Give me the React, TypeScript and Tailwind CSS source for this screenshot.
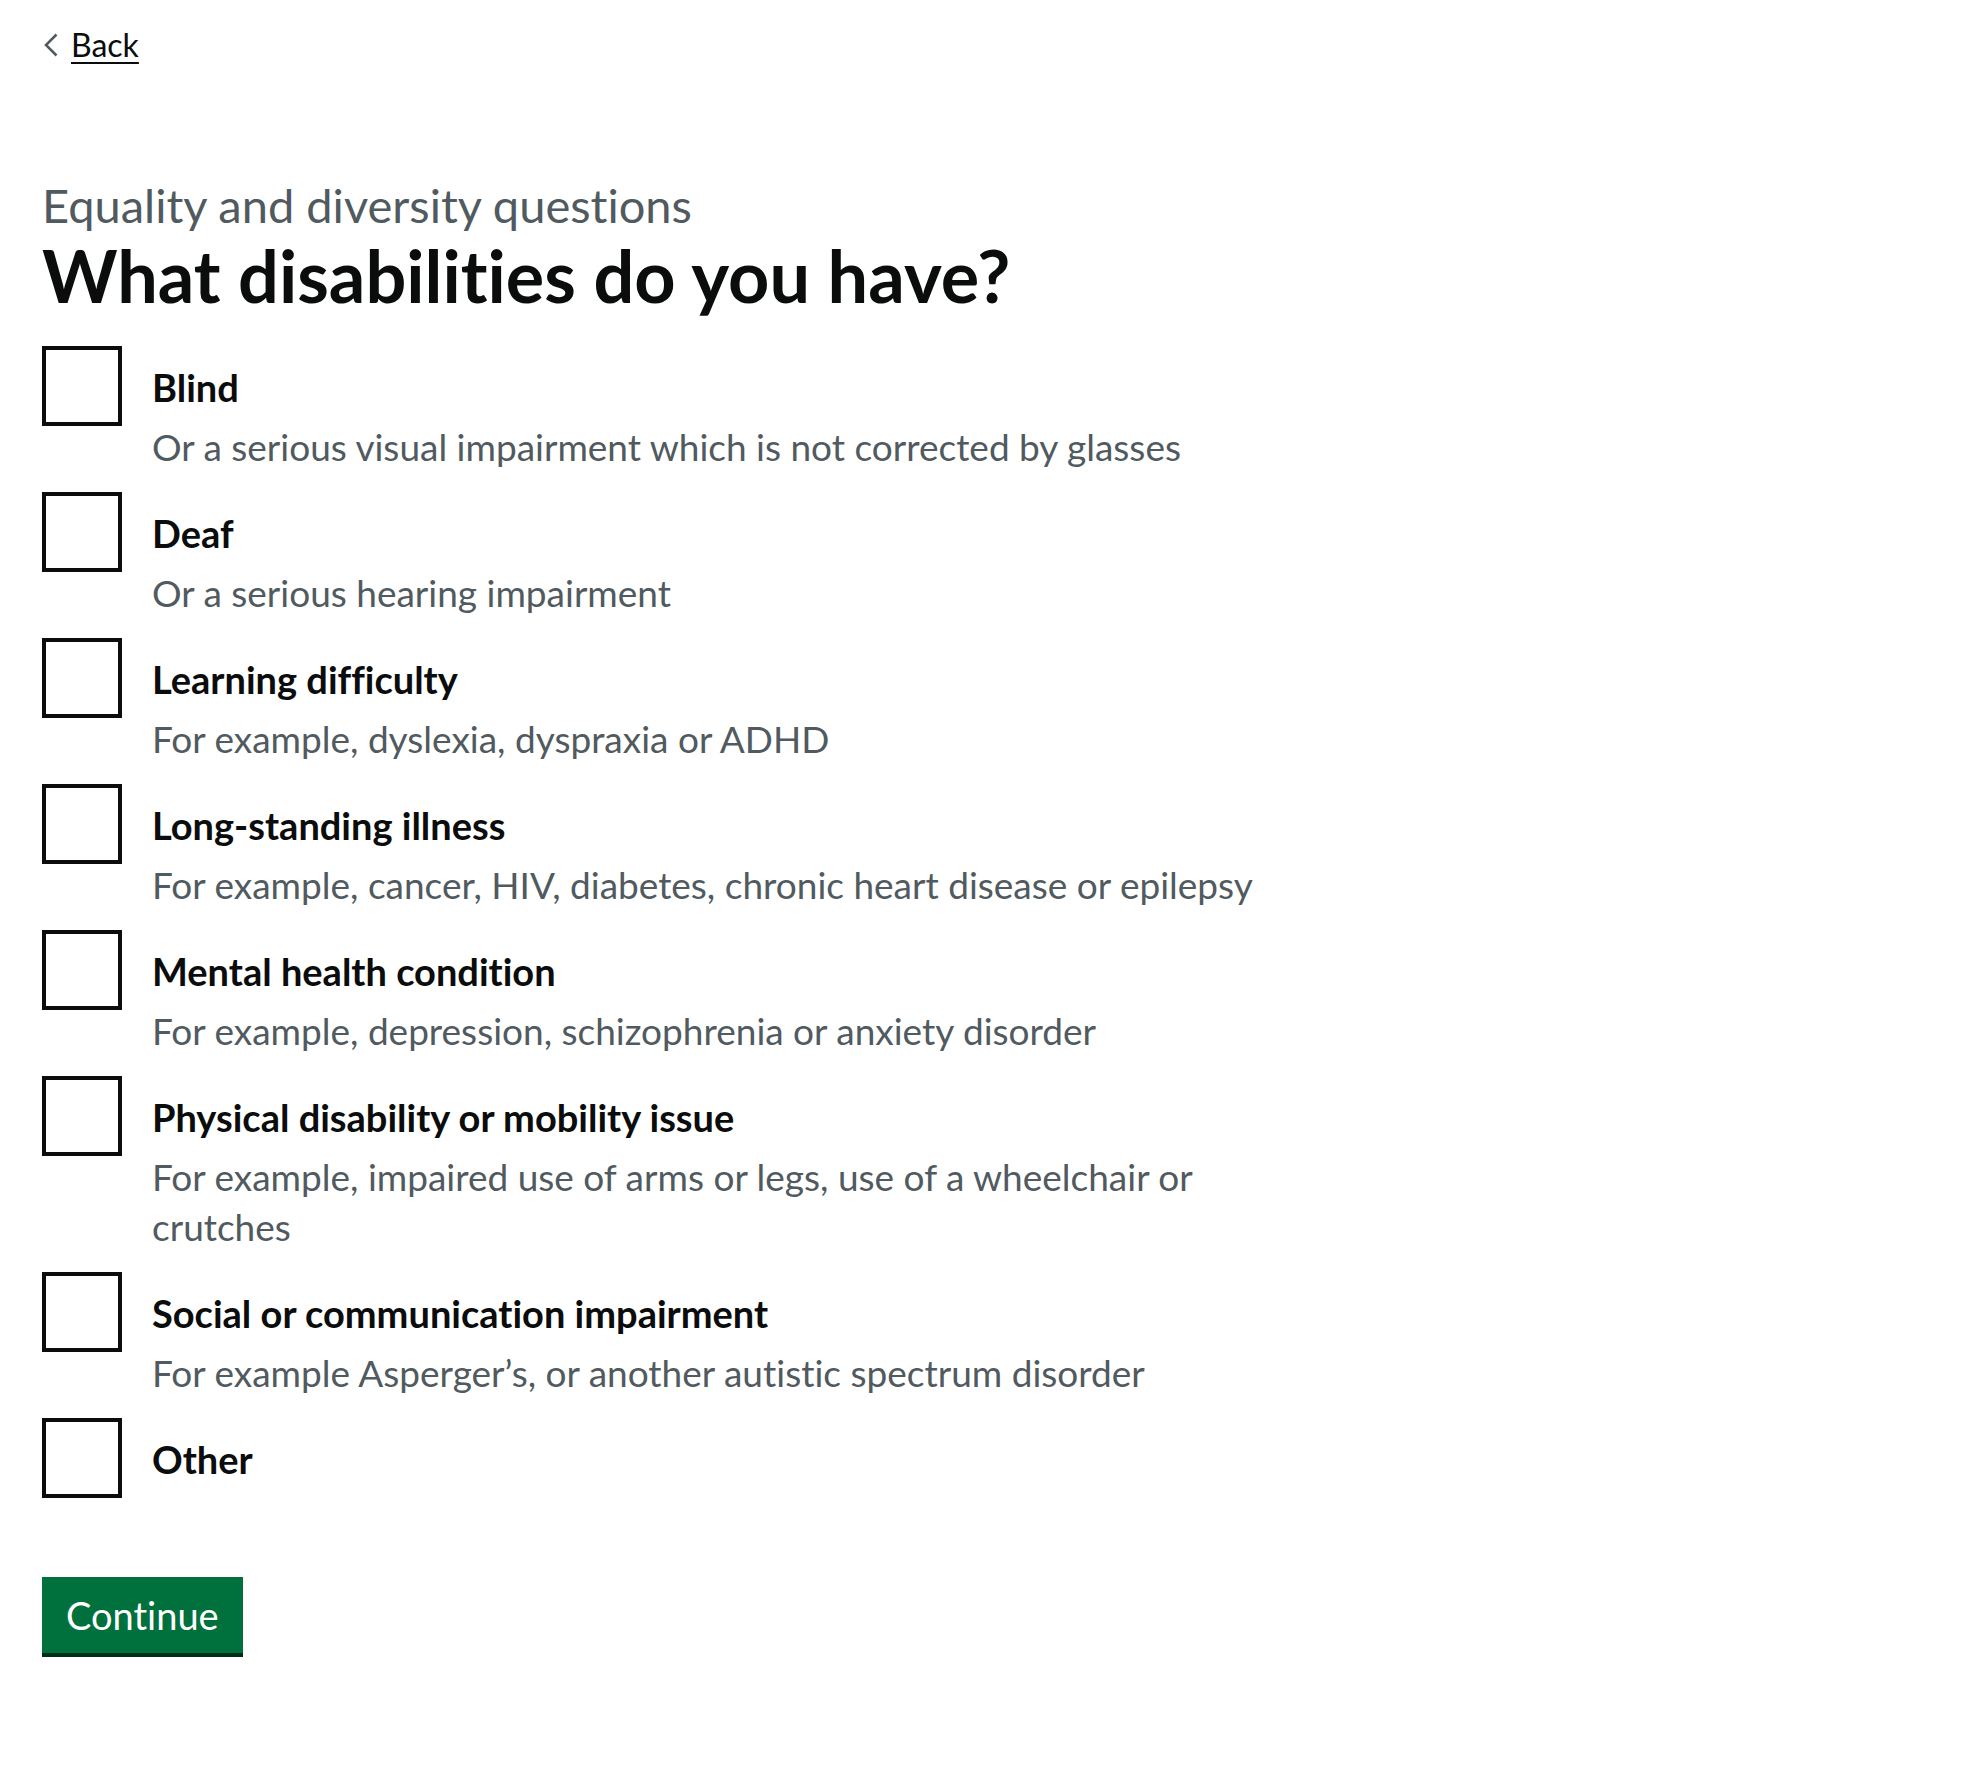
import React, { useState } from 'react';

type Option = {
  label: string;
  hint?: string;
};

const options: Option[] = [
  { label: 'Blind', hint: 'Or a serious visual impairment which is not corrected by glasses' },
  { label: 'Deaf', hint: 'Or a serious hearing impairment' },
  { label: 'Learning difficulty', hint: 'For example, dyslexia, dyspraxia or ADHD' },
  { label: 'Long-standing illness', hint: 'For example, cancer, HIV, diabetes, chronic heart disease or epilepsy' },
  { label: 'Mental health condition', hint: 'For example, depression, schizophrenia or anxiety disorder' },
  {
    label: 'Physical disability or mobility issue',
    hint: 'For example, impaired use of arms or legs, use of a wheelchair or crutches',
  },
  { label: 'Social or communication impairment', hint: 'For example Asperger\u2019s, or another autistic spectrum disorder' },
  { label: 'Other' },
];

const Checkbox: React.FC<{ option: Option; checked: boolean; onToggle: () => void }> = ({
  option,
  checked,
  onToggle,
}) => (
  <div className="relative flex flex-col pl-[80px] mb-[20px] last:mb-0 min-h-[80px]">
    <button
      type="button"
      onClick={onToggle}
      aria-pressed={checked}
      className="absolute left-0 top-0 w-[80px] h-[80px] border-[4px] border-[#0b0c0c] bg-white flex items-center justify-center"
    >
      {checked && (
        <span className="block w-[34px] h-[18px] border-l-[10px] border-b-[10px] border-[#0b0c0c] -rotate-45 -mt-[8px]" />
      )}
    </button>
    <label
      onClick={onToggle}
      className="block pt-[16px] pb-[10px] px-[30px] text-[38px] leading-[50px] font-bold text-[#0b0c0c] cursor-pointer"
    >
      {option.label}
    </label>
    {option.hint && (
      <div className="px-[30px] text-[37px] leading-[50px] text-[#505a5f]">{option.hint}</div>
    )}
  </div>
);

export default function App() {
  const [checked, setChecked] = useState<Record<string, boolean>>({});

  return (
    <div className="min-h-screen bg-white text-[#0b0c0c] font-['Lato',sans-serif] [font-variant-ligatures:none]">
      <div className="pl-[42px] w-[1330px]">
        {/* back link */}
        <div className="pt-[25px] flex items-center h-[65px]">
          <a href="#" className="flex items-center text-[32px] leading-[40px] text-[#0b0c0c]">
            <svg width="14" height="24" viewBox="0 0 14 24" className="ml-[2px] mr-[13px]">
              <polyline points="12.5,1.5 2,12 12.5,22.5" fill="none" stroke="#505a5f" strokeWidth="2.5" />
            </svg>
            <span className="underline decoration-[2px] underline-offset-[5px]">Back</span>
          </a>
        </div>

        <main className="pt-[110px]">
          <fieldset>
            <legend className="mb-[31px]">
              <span className="block text-[47px] leading-[60px] text-[#505a5f]">
                Equality and diversity questions
              </span>
              <h1 className="text-[72px] leading-[80px] font-bold">What disabilities do you have?</h1>
            </legend>

            <div className="flex flex-col">
              {options.map((o) => (
                <Checkbox
                  key={o.label}
                  option={o}
                  checked={!!checked[o.label]}
                  onToggle={() => setChecked((c) => ({ ...c, [o.label]: !c[o.label] }))}
                />
              ))}
            </div>
          </fieldset>

          <button
            type="submit"
            className="mt-[79px] h-[76px] px-[24px] bg-[#00703c] text-white text-[38px] leading-none shadow-[0_4px_0_#002d18]"
          >
            Continue
          </button>
        </main>
      </div>
    </div>
  );
}
